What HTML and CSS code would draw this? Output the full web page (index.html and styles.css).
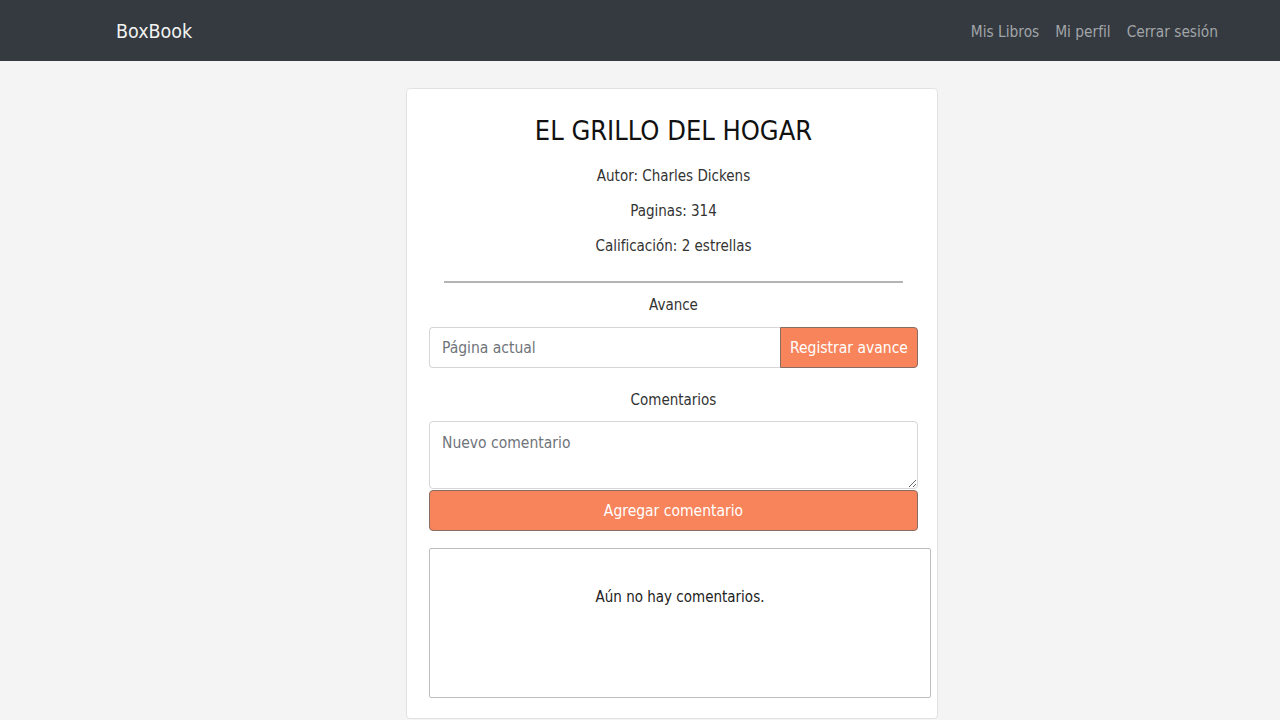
FILE: index.html
```html
<!DOCTYPE html>
<html lang="es">
<head>
<meta charset="utf-8">
<title>BoxBook</title>
<link rel="stylesheet" href="styles.css">
</head>
<body>
<nav class="navbar">
  <a class="brand" href="#">BoxBook</a>
  <div class="nav-links">
    <a href="#">Mis Libros</a>
    <a href="#">Mi perfil</a>
    <a href="#">Cerrar sesión</a>
  </div>
</nav>
<main class="main">
  <section class="card">
    <h1 class="title">EL GRILLO DEL HOGAR</h1>
    <p class="meta first">Autor: Charles Dickens</p>
    <p class="meta">Paginas: 314</p>
    <p class="meta">Calificación: 2 estrellas</p>
    <hr class="divider">
    <p class="label">Avance</p>
    <div class="input-group">
      <input class="input" type="text" placeholder="Página actual">
      <button class="btn btn-side">Registrar avance</button>
    </div>
    <p class="label label-comments">Comentarios</p>
    <textarea class="textarea" placeholder="Nuevo comentario"></textarea>
    <button class="btn btn-block">Agregar comentario</button>
    <div class="comments">Aún no hay comentarios.</div>
  </section>
</main>
</body>
</html>
```
FILE: styles.css
```css
* { box-sizing: border-box; }
html, body { margin: 0; padding: 0; }
body {
  background: #f4f4f4;
  font-family: "DejaVu Sans Condensed", "DejaVu Sans", sans-serif;
  font-stretch: condensed;
  color: #222;
  font-size: 15px;
}
.navbar {
  height: 61px;
  background: #343a40;
  display: flex;
  align-items: center;
  justify-content: space-between;
  padding: 2px 62px 0 116px;
}
.brand {
  color: #f2f2f2;
  text-decoration: none;
  font-size: 19.5px;
}
.nav-links { display: flex; gap: 16px; }
.nav-links a {
  color: #a2a5a8;
  text-decoration: none;
  font-size: 15.3px;
}
.main {
  padding: 27px 0 0 406px;
}
.card {
  width: 532px;
  background: #fff;
  border: 1px solid #e2e2e2;
  border-radius: 4px;
  padding: 24px 19px 20px 22px;
}
.title {
  margin: 0;
  text-align: center;
  font-weight: normal;
  font-size: 27px;
  line-height: 36px;
  color: #111;
}
.meta {
  margin: 11px 0 0;
  text-align: center;
  font-size: 15px;
  line-height: 24px;
  color: #333;
}
.meta.first { margin-top: 15px; }
.divider {
  width: 459px;
  margin: 23px auto 0;
  border: 0;
  border-top: 2px solid #b4b4b4;
}
.label {
  margin: 10px 0 0;
  text-align: center;
  font-size: 15px;
  line-height: 24px;
  color: #333;
}
.label-comments { margin-top: 20px; }
.input-group {
  display: flex;
  margin-top: 10px;
  height: 41px;
}
.input {
  flex: 1;
  min-width: 0;
  border: 1px solid #d6d6d6;
  border-right: 0;
  border-radius: 4px 0 0 4px;
  padding: 1px 12px 0;
  font: inherit;
  font-size: 15.5px;
  color: #555;
}
.input::placeholder, .textarea::placeholder { color: #6f747a; }
.btn {
  background: #f8845b;
  color: #fff;
  border: 1px solid #8a6d62;
  font: inherit;
  font-size: 15.5px;
  cursor: pointer;
  white-space: nowrap;
}
.btn-side {
  width: 138px;
  padding: 0;
  border-radius: 0 4px 4px 0;
}
.textarea {
  display: block;
  width: 100%;
  height: 68px;
  margin-top: 9px;
  border: 1px solid #d6d6d6;
  border-radius: 4px;
  padding: 12px 12px 8px;
  font: inherit;
  font-size: 15.5px;
  resize: vertical;
}
.btn-block {
  display: block;
  width: 100%;
  height: 41px;
  margin-top: 1px;
  border-radius: 4px;
}
.comments {
  width: 502px;
  height: 150px;
  margin-top: 17px;
  border: 1px solid #bdbdbd;
  border-radius: 2px;
  padding-top: 36px;
  text-align: center;
  font-size: 15px;
  line-height: 24px;
  color: #222;
}
```
